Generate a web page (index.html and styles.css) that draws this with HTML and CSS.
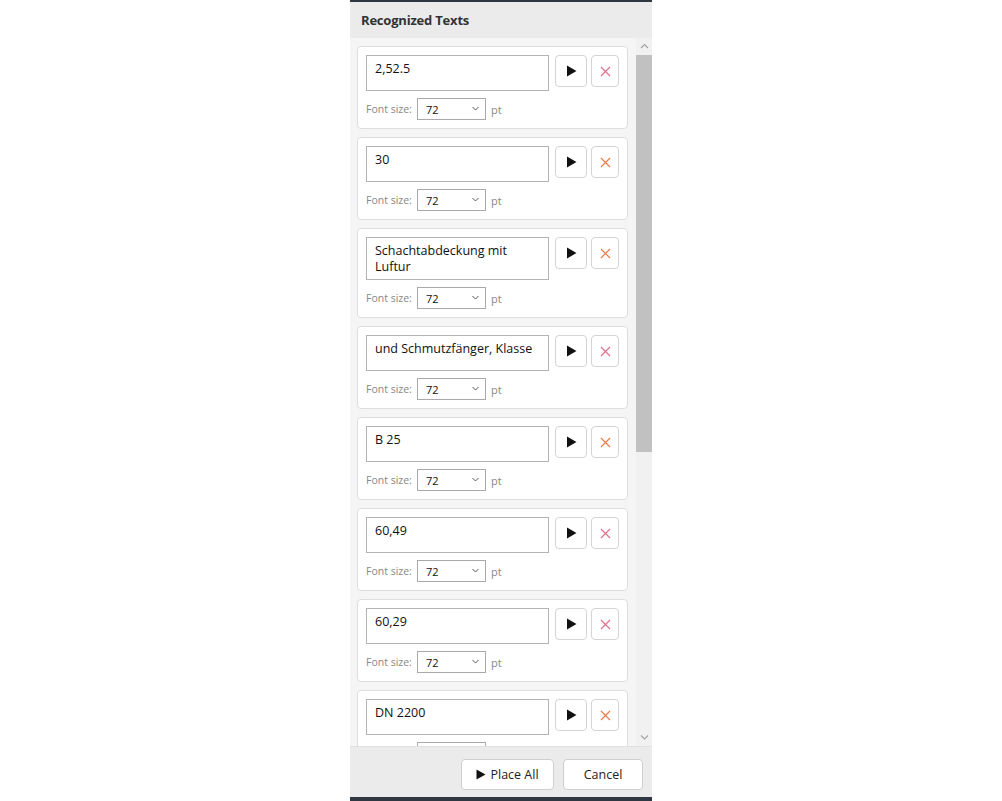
FILE: index.html
```html
<!DOCTYPE html>
<html lang="de">
<head>
  <meta charset="UTF-8">
  <title>Recognized Texts</title>
  <link rel="stylesheet" href="styles.css">
</head>
<body>

  <!-- Dialog mit erkannten Texten -->
  <div class="panel">
    <div class="panel-header">Recognized Texts</div>

    <div class="list-wrap">
      <div class="list">

        <div class="item">
          <div class="item-top">
            <div class="text-box">2,52.5</div>
            <button class="btn-play"><svg width="11" height="12" viewBox="0 0 11 12"><path d="M1 0.5 L10.5 6 L1 11.5 Z" fill="#111"/></svg></button>
            <button class="btn-del pink"><svg width="11" height="11" viewBox="0 0 11 11"><path d="M1 1 L10 10 M10 1 L1 10" stroke="currentColor" stroke-width="1.2"/></svg></button>
          </div>
          <div class="size-row">
            <span class="size-label">Font size:</span>
            <div class="size-select">72<svg class="chev" width="7" height="5" viewBox="0 0 7 5"><path d="M0.5 1 L3.5 4 L6.5 1" fill="none" stroke="#555" stroke-width="1"/></svg></div>
            <span class="unit">pt</span>
          </div>
        </div>

        <div class="item">
          <div class="item-top">
            <div class="text-box">30</div>
            <button class="btn-play"><svg width="11" height="12" viewBox="0 0 11 12"><path d="M1 0.5 L10.5 6 L1 11.5 Z" fill="#111"/></svg></button>
            <button class="btn-del orange"><svg width="11" height="11" viewBox="0 0 11 11"><path d="M1 1 L10 10 M10 1 L1 10" stroke="currentColor" stroke-width="1.2"/></svg></button>
          </div>
          <div class="size-row">
            <span class="size-label">Font size:</span>
            <div class="size-select">72<svg class="chev" width="7" height="5" viewBox="0 0 7 5"><path d="M0.5 1 L3.5 4 L6.5 1" fill="none" stroke="#555" stroke-width="1"/></svg></div>
            <span class="unit">pt</span>
          </div>
        </div>

        <div class="item">
          <div class="item-top">
            <div class="text-box">Schachtabdeckung mit Luftur</div>
            <button class="btn-play"><svg width="11" height="12" viewBox="0 0 11 12"><path d="M1 0.5 L10.5 6 L1 11.5 Z" fill="#111"/></svg></button>
            <button class="btn-del orange"><svg width="11" height="11" viewBox="0 0 11 11"><path d="M1 1 L10 10 M10 1 L1 10" stroke="currentColor" stroke-width="1.2"/></svg></button>
          </div>
          <div class="size-row">
            <span class="size-label">Font size:</span>
            <div class="size-select">72<svg class="chev" width="7" height="5" viewBox="0 0 7 5"><path d="M0.5 1 L3.5 4 L6.5 1" fill="none" stroke="#555" stroke-width="1"/></svg></div>
            <span class="unit">pt</span>
          </div>
        </div>

        <div class="item">
          <div class="item-top">
            <div class="text-box">und Schmutzfänger, Klasse</div>
            <button class="btn-play"><svg width="11" height="12" viewBox="0 0 11 12"><path d="M1 0.5 L10.5 6 L1 11.5 Z" fill="#111"/></svg></button>
            <button class="btn-del pink"><svg width="11" height="11" viewBox="0 0 11 11"><path d="M1 1 L10 10 M10 1 L1 10" stroke="currentColor" stroke-width="1.2"/></svg></button>
          </div>
          <div class="size-row">
            <span class="size-label">Font size:</span>
            <div class="size-select">72<svg class="chev" width="7" height="5" viewBox="0 0 7 5"><path d="M0.5 1 L3.5 4 L6.5 1" fill="none" stroke="#555" stroke-width="1"/></svg></div>
            <span class="unit">pt</span>
          </div>
        </div>

        <div class="item">
          <div class="item-top">
            <div class="text-box">B 25</div>
            <button class="btn-play"><svg width="11" height="12" viewBox="0 0 11 12"><path d="M1 0.5 L10.5 6 L1 11.5 Z" fill="#111"/></svg></button>
            <button class="btn-del orange"><svg width="11" height="11" viewBox="0 0 11 11"><path d="M1 1 L10 10 M10 1 L1 10" stroke="currentColor" stroke-width="1.2"/></svg></button>
          </div>
          <div class="size-row">
            <span class="size-label">Font size:</span>
            <div class="size-select">72<svg class="chev" width="7" height="5" viewBox="0 0 7 5"><path d="M0.5 1 L3.5 4 L6.5 1" fill="none" stroke="#555" stroke-width="1"/></svg></div>
            <span class="unit">pt</span>
          </div>
        </div>

        <div class="item">
          <div class="item-top">
            <div class="text-box">60,49</div>
            <button class="btn-play"><svg width="11" height="12" viewBox="0 0 11 12"><path d="M1 0.5 L10.5 6 L1 11.5 Z" fill="#111"/></svg></button>
            <button class="btn-del pink"><svg width="11" height="11" viewBox="0 0 11 11"><path d="M1 1 L10 10 M10 1 L1 10" stroke="currentColor" stroke-width="1.2"/></svg></button>
          </div>
          <div class="size-row">
            <span class="size-label">Font size:</span>
            <div class="size-select">72<svg class="chev" width="7" height="5" viewBox="0 0 7 5"><path d="M0.5 1 L3.5 4 L6.5 1" fill="none" stroke="#555" stroke-width="1"/></svg></div>
            <span class="unit">pt</span>
          </div>
        </div>

        <div class="item">
          <div class="item-top">
            <div class="text-box">60,29</div>
            <button class="btn-play"><svg width="11" height="12" viewBox="0 0 11 12"><path d="M1 0.5 L10.5 6 L1 11.5 Z" fill="#111"/></svg></button>
            <button class="btn-del pink"><svg width="11" height="11" viewBox="0 0 11 11"><path d="M1 1 L10 10 M10 1 L1 10" stroke="currentColor" stroke-width="1.2"/></svg></button>
          </div>
          <div class="size-row">
            <span class="size-label">Font size:</span>
            <div class="size-select">72<svg class="chev" width="7" height="5" viewBox="0 0 7 5"><path d="M0.5 1 L3.5 4 L6.5 1" fill="none" stroke="#555" stroke-width="1"/></svg></div>
            <span class="unit">pt</span>
          </div>
        </div>

        <div class="item">
          <div class="item-top">
            <div class="text-box">DN 2200</div>
            <button class="btn-play"><svg width="11" height="12" viewBox="0 0 11 12"><path d="M1 0.5 L10.5 6 L1 11.5 Z" fill="#111"/></svg></button>
            <button class="btn-del orange"><svg width="11" height="11" viewBox="0 0 11 11"><path d="M1 1 L10 10 M10 1 L1 10" stroke="currentColor" stroke-width="1.2"/></svg></button>
          </div>
          <div class="size-row">
            <span class="size-label">Font size:</span>
            <div class="size-select">72<svg class="chev" width="7" height="5" viewBox="0 0 7 5"><path d="M0.5 1 L3.5 4 L6.5 1" fill="none" stroke="#555" stroke-width="1"/></svg></div>
            <span class="unit">pt</span>
          </div>
        </div>

      </div>

      <!-- Scrollleiste -->
      <div class="scrollbar">
        <svg class="arrow" width="9" height="17" viewBox="0 0 9 17"><path d="M1 10 L4.5 6.5 L8 10" fill="none" stroke="#a3a3a3" stroke-width="1.2"/></svg>
        <div class="thumb"></div>
        <svg class="arrow down" width="9" height="17" viewBox="0 0 9 17"><path d="M1 6.5 L4.5 10 L8 6.5" fill="none" stroke="#a3a3a3" stroke-width="1.2"/></svg>
      </div>
    </div>

    <div class="panel-footer">
      <button class="btn place"><svg width="10" height="11" viewBox="0 0 10 11"><path d="M0.5 0.5 L9.5 5.5 L0.5 10.5 Z" fill="#111"/></svg> Place All</button>
      <button class="btn cancel">Cancel</button>
    </div>
  </div>

</body>
</html>
```

FILE: styles.css
```css
/* Gesamtlayout */
body {
  font-family: "Open Sans", "Noto Sans", sans-serif;
  margin: 0;
  padding: 0;
  background-color: #fff;
  color: #222;
  height: 801px;
  overflow: hidden;
  display: flex;
  justify-content: center;
}

.panel {
  width: 302px;
  height: 801px;
  box-sizing: border-box;
  border-top: 2px solid #2f3742;
  border-bottom: 4px solid #2f3742;
  display: flex;
  flex-direction: column;
  background-color: #ebebeb;
}

/* Kopfzeile */
.panel-header {
  height: 36px;
  padding-left: 11px;
  display: flex;
  align-items: center;
  font-size: 13px;
  font-weight: bold;
  color: #333;
  letter-spacing: -0.2px;
}

/* Liste */
.list-wrap {
  flex: 1;
  display: flex;
  overflow: hidden;
  background-color: #f5f5f5;
}

.list {
  flex: 1;
  padding: 8px 8px 0 7px;
  display: flex;
  flex-direction: column;
  gap: 8px;
  overflow: hidden;
}

.item {
  background: #fff;
  border: 1px solid #dedede;
  border-radius: 4px;
  padding: 8px;
  flex-shrink: 0;
}

.item-top {
  display: flex;
  align-items: flex-start;
}

.text-box {
  width: 183px;
  min-height: 36px;
  box-sizing: border-box;
  border: 1px solid #b4b4b4;
  padding: 5px 8px 4px 8px;
  font-size: 12.5px;
  line-height: 16px;
  color: #111;
}

.btn-play, .btn-del {
  height: 32px;
  border: 1px solid #d4d4d4;
  border-radius: 4px;
  background: #fff;
  padding: 0;
  display: flex;
  align-items: center;
  justify-content: center;
}

.btn-play {
  width: 32px;
  margin-left: 6px;
}

.btn-del {
  width: 28px;
  margin-left: 4px;
}

.btn-del.pink {
  color: #e4708c;
}

.btn-del.orange {
  color: #ee7a46;
}

/* Schriftgröße */
.size-row {
  display: flex;
  align-items: center;
  margin-top: 7px;
  height: 22px;
}

.size-label {
  font-size: 10.5px;
  color: #888;
  width: 51px;
}

.size-select {
  width: 69px;
  height: 22px;
  box-sizing: border-box;
  border: 1px solid #aaa;
  font-size: 11px;
  padding-left: 8px;
  display: flex;
  align-items: center;
  position: relative;
  color: #111;
}

.chev {
  position: absolute;
  right: 6px;
  top: 7px;
}

.unit {
  font-size: 11px;
  color: #888;
  margin-left: 5px;
}

/* Scrollleiste */
.scrollbar {
  width: 16px;
  background-color: #f1f1f1;
  display: flex;
  flex-direction: column;
  align-items: center;
}

.arrow {
  flex-shrink: 0;
}

.arrow.down {
  margin-top: auto;
}

.thumb {
  width: 16px;
  height: 397px;
  background-color: #c1c1c1;
}

/* Fußzeile */
.panel-footer {
  height: 51px;
  box-sizing: border-box;
  border-top: 1px solid #e0e0e0;
  display: flex;
  justify-content: flex-end;
  align-items: flex-start;
  gap: 9px;
  padding: 12px 9px 0 0;
}

.btn {
  height: 31px;
  padding: 0;
  border: 1px solid #cfcfcf;
  border-radius: 4px;
  background: #fff;
  font-family: "Open Sans", "Noto Sans", sans-serif;
  font-size: 12.5px;
  color: #222;
  white-space: nowrap;
  display: flex;
  align-items: center;
  justify-content: center;
  gap: 4px;
}

.btn.place {
  width: 93px;
}

.btn.cancel {
  width: 80px;
}
```
